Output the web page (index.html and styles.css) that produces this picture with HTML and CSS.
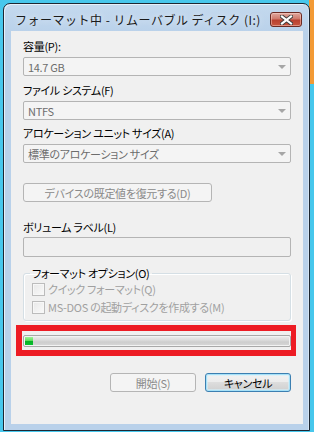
FILE: index.html
```html
<!DOCTYPE html>
<html lang="ja">
<head>
    <meta charset="UTF-8">
    <title>フォーマット中 - リムーバブル ディスク (I:)</title>
    <link rel="stylesheet" href="styles.css">
</head>
<body>
    <div class="window">
        <!-- Title bar -->
        <div class="titlebar">
            <span class="title">フォーマット中 - リムーバブル ディスク (I:)</span>
            <div class="close">
                <svg width="13" height="10" viewBox="0 0 13 10">
                    <path d="M2 1.5 L11 8.5 M11 1.5 L2 8.5" stroke="#3b3b3b" stroke-width="4" stroke-linecap="square"/>
                    <path d="M2 1.5 L11 8.5 M11 1.5 L2 8.5" stroke="#ffffff" stroke-width="2.2" stroke-linecap="square"/>
                </svg>
            </div>
        </div>

        <div class="client">
            <div class="label">容量(P):</div>
            <div class="combo"><span>14.7 GB</span><i class="arrow"></i></div>

            <div class="label gap">ファイル システム(F)</div>
            <div class="combo"><span>NTFS</span><i class="arrow"></i></div>

            <div class="label gap-sm">アロケーション ユニット サイズ(A)</div>
            <div class="combo"><span>標準のアロケーション サイズ</span><i class="arrow"></i></div>

            <div class="btn btn-disabled btn-restore">デバイスの既定値を復元する(D)</div>

            <div class="label volume-label">ボリューム ラベル(L)</div>
            <div class="textbox"></div>

            <!-- Format options -->
            <fieldset class="group">
                <legend>フォーマット オプション(O)</legend>
                <div class="check"><i class="box"></i><span>クイック フォーマット(Q)</span></div>
                <div class="check"><i class="box"></i><span>MS-DOS の起動ディスクを作成する(M)</span></div>
            </fieldset>

            <!-- Progress (highlighted) -->
            <div class="highlight">
                <div class="progress"><span style="width: 8px"></span></div>
            </div>

            <div class="actions">
                <div class="btn btn-disabled">開始(S)</div>
                <div class="btn btn-default">キャンセル</div>
            </div>
        </div>
    </div>
</body>
</html>
```

FILE: styles.css
```css
/* Global */
* {
    box-sizing: border-box;
}

body {
    margin: 0;
    width: 314px;
    height: 432px;
    overflow: hidden;
    padding: 3px 0 0 3px;
    background: linear-gradient(#f39a35, #f39a35) no-repeat right top / 5px 84px, #47c7ec;
    font-family: "Noto Sans CJK JP", sans-serif;
    font-size: 12px;
    color: #000;
}

/* Window frame */
.window {
    width: 307px;
    height: 428px;
    border: 1px solid #1d2733;
    border-radius: 7px 7px 0 0;
    background: linear-gradient(#c4d9ee, #b9d1ea 30px);
    box-shadow: inset 1px 1px 0 #e6f0fa, inset -1px 0 0 #d4e4f4;
    padding: 0 6px 6px 7px;
    display: flex;
    flex-direction: column;
}

.titlebar {
    height: 27px;
    display: flex;
    align-items: flex-start;
    justify-content: space-between;
}

.title {
    margin: 9px 0 0 4px;
    line-height: 14px;
    font-size: 12px;
    letter-spacing: 0.5px;
    color: #1a1a1a;
    text-shadow: 0 0 6px rgba(255, 255, 255, 0.9);
}

.close {
    width: 32px;
    height: 15px;
    margin: 8px 1px 0 0;
    border: 1px solid #6b2a23;
    border-radius: 3px;
    background: linear-gradient(#e0a89f, #cf7a6c 45%, #b9402f 55%, #c8563f);
    box-shadow: inset 0 0 0 1px rgba(255, 220, 210, 0.45);
    display: flex;
    align-items: center;
    justify-content: center;
}

/* Dialog client area */
.client {
    flex: 1;
    background: #f0f0f0;
    padding: 8px 12px 0 12px;
    display: flex;
    flex-direction: column;
    font-size: 11px;
    letter-spacing: -0.3px;
    font-feature-settings: "palt";
}

.label {
    line-height: 14px;
}

.gap {
    margin-top: 7px;
}

.gap-sm {
    margin-top: 6px;
}

.combo {
    height: 19px;
    margin-top: 4px;
    border: 1px solid #b4b4b4;
    border-radius: 2px;
    background: #f4f4f4;
    color: #6d6d6d;
    display: flex;
    align-items: center;
    justify-content: space-between;
    padding: 0 4px 0 4px;
    line-height: 14px;
}

.arrow {
    width: 0;
    height: 0;
    border-left: 4px solid transparent;
    border-right: 4px solid transparent;
    border-top: 4px solid #a6a6a6;
}

/* Buttons */
.btn {
    height: 19px;
    border-radius: 3px;
    display: flex;
    align-items: center;
    justify-content: center;
    line-height: 14px;
}

.btn-disabled {
    border: 1px solid #b5b5b5;
    background: #f4f4f4;
    color: #8a8a8a;
}

.btn-default {
    border: 1px solid #3c7fb1;
    background: linear-gradient(#f2f2f2, #ebebeb 50%, #dddddd 50%, #cfcfcf);
    box-shadow: inset 0 0 0 1px #a6e1f8, inset 0 0 0 2px rgba(210, 240, 252, 0.6);
}

.btn-restore {
    width: 189px;
    margin-top: 20px;
}

.volume-label {
    margin-top: 18px;
}

.textbox {
    height: 20px;
    margin-top: 3px;
    border: 1px solid #b4b4b4;
    border-radius: 2px;
    background: #f0f0f0;
}

/* Group box */
.group {
    margin: 9px 0 0 0;
    padding: 0 8px 4px 8px;
    border: 1px solid #d5dfe5;
    border-radius: 3px;
    box-shadow: inset 1px 1px 0 #ffffff, 1px 1px 0 #ffffff;
}

.group legend {
    padding: 0 2px;
    margin-left: -2px;
    line-height: 14px;
}

.check {
    height: 18px;
    display: flex;
    align-items: center;
    gap: 3px;
    color: #a0a0a0;
    line-height: 14px;
}

.box {
    width: 13px;
    height: 13px;
    border: 1px solid #bcbcbc;
    background: linear-gradient(135deg, #e8e8e8, #fafafa);
    box-shadow: inset 0 0 0 1px #f7f7f7;
}

/* Progress bar + red highlight */
.highlight {
    width: 280px;
    margin: 4px 0 0 -7px;
    border: 6px solid #ed1c24;
    border-right-width: 5px;
    padding: 4px 0 3px 1px;
}

.progress {
    height: 12px;
    border: 1px solid #a8a8a8;
    border-radius: 2px;
    background: linear-gradient(#eeeeee, #dcdcdc 40%, #cdcdcd 60%, #d8d8d8);
    box-shadow: inset 0 0 0 1px #f2f2f2;
    padding: 1px;
}

.progress span {
    display: block;
    height: 100%;
    background: linear-gradient(#9ef29a, #5fdd5d 45%, #06b025 50%, #0bbf2e);
}

/* Bottom buttons */
.actions {
    margin-top: 17px;
    display: flex;
    justify-content: flex-end;
    gap: 9px;
}

.actions .btn {
    width: 86px;
}
```
